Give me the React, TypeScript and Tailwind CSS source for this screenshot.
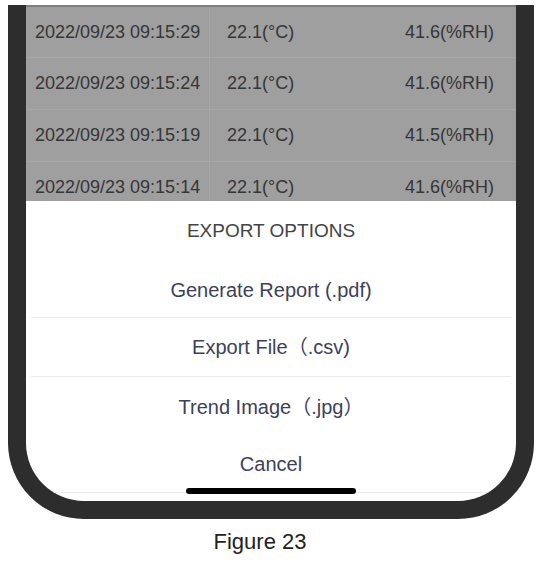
import React from "react";

interface Reading {
  time: string;
  temp: string;
  hum: string;
}

const readings: Reading[] = [
  { time: "2022/09/23 09:15:29", temp: "22.1(°C)", hum: "41.6(%RH)" },
  { time: "2022/09/23 09:15:24", temp: "22.1(°C)", hum: "41.6(%RH)" },
  { time: "2022/09/23 09:15:19", temp: "22.1(°C)", hum: "41.5(%RH)" },
  { time: "2022/09/23 09:15:14", temp: "22.1(°C)", hum: "41.6(%RH)" },
];

const font = { fontFamily: '"Liberation Sans", Arial, "Noto Sans CJK SC", sans-serif' };

export default function App() {
  return (
    <div className="w-[540px] h-[561px] bg-white flex flex-col overflow-hidden" style={font}>
      <div className="mt-[5px] ml-[8px] w-[526px] bg-[#2d2d2d] rounded-b-[76px] px-[18px] pb-[18px]">
        <div className="bg-white rounded-b-[58px] overflow-hidden flex flex-col">
          {/* dimmed readings list behind the sheet */}
          <div className="h-[196px] overflow-hidden bg-[#9f9f9f] border-t-2 border-[#7f7f7f] text-[#363636] text-[18px]">
            {readings.map((r, i) => (
              <div
                key={r.time}
                className={`flex items-center ${i === 0 ? "h-[50px]" : "h-[52px] border-t border-[#a7a7a7]"}`}
              >
                <div className="w-[184px] h-full flex items-center pl-[9px] border-r border-[#a7a7a7]">
                  {r.time}
                </div>
                <div className="flex-1 pl-[17px]">{r.temp}</div>
                <div className="pr-[22px]">{r.hum}</div>
              </div>
            ))}
          </div>

          {/* action sheet */}
          <div className="flex flex-col items-center text-[#3d4159] text-[20px]">
            <div className="h-[60px] flex items-center text-[19px] text-[#444444]">EXPORT OPTIONS</div>
            <div className="w-full px-[5px] flex flex-col">
              <div className="h-[57px] flex items-center justify-center border-b border-[#ececec] pt-[2px]">
                Generate Report (.pdf)
              </div>
              <div className="h-[59px] flex items-center justify-center border-b border-[#ececec]">
                Export File（.csv)
              </div>
              <div className="h-[59px] flex items-center justify-center">Trend Image（.jpg）</div>
              <div className="relative h-[57px] flex items-center justify-center border-b border-[#ececec]">
                Cancel
                <div className="absolute bottom-[-2px] w-[170px] h-[6px] rounded-full bg-black" />
              </div>
            </div>
            <div className="h-[8px]" />
          </div>
        </div>
      </div>
      <div className="flex-1 flex items-center justify-center text-[22px] text-[#222222] pt-[3px] pr-[20px]">
        Figure 23
      </div>
    </div>
  );
}
